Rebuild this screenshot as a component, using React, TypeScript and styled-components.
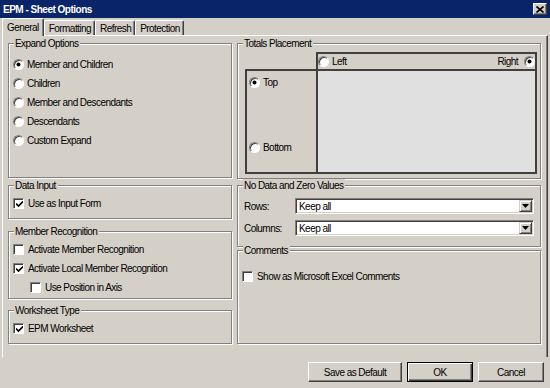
import { FC, ReactNode } from 'react';
import styled, { createGlobalStyle } from 'styled-components';

const GlobalStyle = createGlobalStyle`
  html, body {
    margin: 0;
    padding: 0;
    background: #d4d0c8;
  }
  #root {
    width: 550px;
    height: 388px;
    overflow: hidden;
  }
`;

const Window = styled.div`
  width: 550px;
  height: 388px;
  display: flex;
  flex-direction: column;
  background: #d4d0c8;
  color: #000;
  font-family: 'Liberation Sans', Arial, sans-serif;
  font-size: 10px;
  letter-spacing: -0.55px;
  line-height: 13px;
  box-sizing: border-box;
`;

const TitleBar = styled.div`
  height: 18px;
  flex: none;
  display: flex;
  align-items: center;
  justify-content: space-between;
  padding: 0 3px 0 3px;
  background: #0a246a;
  color: #fff;
  font-weight: bold;
  letter-spacing: -0.5px;
`;

const CloseButton = styled.div`
  width: 14px;
  height: 12px;
  box-sizing: border-box;
  display: flex;
  align-items: center;
  justify-content: center;
  background: #d4d0c8;
  border: 1px solid;
  border-color: #fff #404040 #404040 #fff;
  box-shadow: inset -1px -1px 0 #808080;
`;

const TabStrip = styled.div`
  height: 17px;
  flex: none;
  display: flex;
  align-items: flex-end;
  padding-left: 2px;
  position: relative;
  z-index: 1;
`;

const Tab = styled.div<{ $active?: boolean }>`
  height: ${({ $active }) => ($active ? 18 : 15)}px;
  margin-bottom: ${({ $active }) => ($active ? -1 : 0)}px;
  box-sizing: border-box;
  display: flex;
  align-items: center;
  padding: 0 ${({ $active }) => ($active ? 4 : 3)}px 0 4px;
  background: #d4d0c8;
  border-left: 1px solid #fff;
  border-top: 1px solid #fff;
  border-right: 1px solid #404040;
  box-shadow: inset -1px 0 0 #808080;
  border-radius: 2px 2px 0 0;
`;

const TabPage = styled.div`
  height: 322px;
  flex: none;
  margin: 0 2px;
  box-sizing: border-box;
  border-left: 1px solid #fff;
  border-top: 1px solid #fff;
  border-right: 1px solid #404040;
  box-shadow: inset -1px 0 0 #808080;
  display: grid;
  grid-template-columns: 224px 304px;
  column-gap: 5px;
  padding: 7px 0 0 5px;
  align-items: start;
`;

const Column = styled.div`
  display: flex;
  flex-direction: column;
`;

const Group = styled.div<{ $h: number; $mt?: number; $pt: number; $pl?: number }>`
  position: relative;
  box-sizing: border-box;
  height: ${({ $h }) => $h}px;
  margin-top: ${({ $mt }) => $mt ?? 0}px;
  padding: ${({ $pt }) => $pt}px 6px 0 ${({ $pl }) => $pl ?? 4}px;
  border: 1px solid #808080;
  box-shadow: inset 1px 1px 0 #fff, 1px 1px 0 #fff;
`;

const Caption = styled.span`
  position: absolute;
  top: -7px;
  left: 5px;
  padding: 0 2px 0 1px;
  background: #d4d0c8;
  line-height: 13px;
`;

const Row = styled.div<{ $indent?: number }>`
  height: 19px;
  display: flex;
  align-items: center;
  gap: 4px;
  padding-left: ${({ $indent }) => $indent ?? 0}px;
  white-space: nowrap;
`;

const RadioCircle = styled.span<{ $checked?: boolean }>`
  width: 11px;
  height: 11px;
  flex: none;
  box-sizing: border-box;
  border-radius: 50%;
  background: #fff;
  border: 1px solid;
  border-color: #808080 #fff #fff #808080;
  box-shadow: inset 1px 1px 0 #404040;
  position: relative;
  margin-right: -1px;
  &::after {
    content: '';
    display: ${({ $checked }) => ($checked ? 'block' : 'none')};
    position: absolute;
    left: 3px;
    top: 3px;
    width: 3px;
    height: 3px;
    border-radius: 50%;
    background: #000;
    box-shadow: 0 0 0 0.5px #000;
  }
`;

const CheckSquare = styled.span`
  width: 11px;
  height: 11px;
  flex: none;
  box-sizing: border-box;
  background: #fff;
  border: 1px solid;
  border-color: #808080 #fff #fff #808080;
  box-shadow: inset 1px 1px 0 #404040;
  display: flex;
  align-items: center;
  justify-content: center;
  padding: 1px 0 0 1px;
`;

const Radio: FC<{ checked?: boolean; children?: ReactNode }> = ({ checked, children }) => (
  <Row>
    <RadioCircle $checked={checked} />
    {children}
  </Row>
);

const Check: FC<{ checked?: boolean; indent?: number; children: ReactNode }> = ({
  checked,
  indent,
  children,
}) => (
  <Row $indent={indent}>
    <CheckSquare>
      {checked && (
        <svg width="7" height="7" viewBox="0 0 7 7">
          <path d="M0 2.5 L2.5 5 L7 0.5" stroke="#000" strokeWidth="1.6" fill="none" />
        </svg>
      )}
    </CheckSquare>
    {children}
  </Row>
);

const PlacementGrid = styled.div`
  display: grid;
  grid-template-columns: 71px 1fr;
  grid-template-rows: 19px 1fr;
  width: 292px;
  height: 122px;
`;

const PlacementHeader = styled.div`
  grid-column: 2;
  grid-row: 1;
  box-sizing: border-box;
  border: 2px solid #404040;
  display: flex;
  align-items: center;
  justify-content: space-between;
  padding: 0 1px 0 0;
  & > div:last-child {
    flex-direction: row-reverse;
    gap: 6px;
  }
`;

const PlacementSide = styled.div`
  grid-column: 1;
  grid-row: 2;
  margin-top: -2px;
  box-sizing: border-box;
  border: 2px solid #404040;
  border-right: none;
  display: flex;
  flex-direction: column;
  justify-content: space-between;
  padding: 2px 0 15px 2px;
  & > div {
    gap: 4px;
  }
`;

const PlacementArea = styled.div`
  grid-column: 2;
  grid-row: 2;
  box-sizing: border-box;
  border: 2px solid #404040;
  border-top: none;
  background: #e0e0e0;
`;

const FieldRow = styled.div`
  display: grid;
  grid-template-columns: 51px 1fr;
  align-items: center;
  height: 16px;
  margin-bottom: 6px;
`;

const Select = styled.div`
  height: 16px;
  box-sizing: border-box;
  background: #fff;
  border: 1px solid;
  border-color: #808080 #fff #fff #808080;
  box-shadow: inset 1px 1px 0 #404040, inset -1px -1px 0 #d4d0c8;
  display: flex;
  align-items: center;
  justify-content: space-between;
  padding: 1px 1px 1px 3px;
`;

const DropButton = styled.span`
  width: 13px;
  height: 12px;
  box-sizing: border-box;
  background: #d4d0c8;
  border: 1px solid;
  border-color: #d4d0c8 #404040 #404040 #d4d0c8;
  box-shadow: inset 1px 1px 0 #fff, inset -1px -1px 0 #808080;
  display: flex;
  align-items: center;
  justify-content: center;
`;

const ButtonBar = styled.div`
  display: flex;
  justify-content: flex-end;
  gap: 5px;
  padding-right: 6px;
  margin-top: 5px;
`;

const Button = styled.div<{ $w: number; $default?: boolean }>`
  width: ${({ $w }) => $w}px;
  height: 20px;
  box-sizing: border-box;
  display: flex;
  align-items: center;
  justify-content: center;
  background: #d4d0c8;
  border: 1px solid;
  border-color: ${({ $default }) => ($default ? '#000' : '#fff #404040 #404040 #fff')};
  box-shadow: ${({ $default }) =>
    $default
      ? 'inset 1px 1px 0 #fff, inset -1px -1px 0 #404040, inset -2px -2px 0 #808080'
      : 'inset -1px -1px 0 #808080'};
`;

const Arrow = () => (
  <svg width="7" height="4" viewBox="0 0 7 4">
    <path d="M0 0 H7 L3.5 4 Z" fill="#000" />
  </svg>
);

export default function App() {
  return (
    <Window>
      <GlobalStyle />
      <TitleBar>
        <span>EPM - Sheet Options</span>
        <CloseButton>
          <svg width="8" height="7" viewBox="0 0 8 7">
            <path d="M0.5 0.5 L7.5 6.5 M7.5 0.5 L0.5 6.5" stroke="#000" strokeWidth="1.6" />
          </svg>
        </CloseButton>
      </TitleBar>
      <TabStrip>
        <Tab $active>General</Tab>
        <Tab>Formatting</Tab>
        <Tab>Refresh</Tab>
        <Tab>Protection</Tab>
      </TabStrip>
      <TabPage>
        <Column>
          <Group $h={135} $pt={11}>
            <Caption>Expand Options</Caption>
            <Radio checked>Member and Children</Radio>
            <Radio>Children</Radio>
            <Radio>Member and Descendants</Radio>
            <Radio>Descendants</Radio>
            <Radio>Custom Expand</Radio>
          </Group>
          <Group $h={34} $mt={7} $pt={8}>
            <Caption>Data Input</Caption>
            <Check checked>Use as Input Form</Check>
          </Group>
          <Group $h={68} $mt={12} $pt={8}>
            <Caption>Member Recognition</Caption>
            <Check>Activate Member Recognition</Check>
            <Check checked>Activate Local Member Recognition</Check>
            <Check indent={17}>Use Position in Axis</Check>
          </Group>
          <Group $h={34} $mt={11} $pt={8}>
            <Caption>Worksheet Type</Caption>
            <Check checked>EPM Worksheet</Check>
          </Group>
        </Column>
        <Column>
          <Group $h={136} $pt={8} $pl={7}>
            <Caption>Totals Placement</Caption>
            <PlacementGrid>
              <PlacementHeader>
                <Radio>Left</Radio>
                <Radio checked>Right</Radio>
              </PlacementHeader>
              <PlacementSide>
                <Radio checked>Top</Radio>
                <Radio>Bottom</Radio>
              </PlacementSide>
              <PlacementArea />
            </PlacementGrid>
          </Group>
          <Group $h={62} $mt={6} $pt={12} $pl={6}>
            <Caption>No Data and Zero Values</Caption>
            <FieldRow>
              <span>Rows:</span>
              <Select>
                <span>Keep all</span>
                <DropButton>
                  <Arrow />
                </DropButton>
              </Select>
            </FieldRow>
            <FieldRow>
              <span>Columns:</span>
              <Select>
                <span>Keep all</span>
                <DropButton>
                  <Arrow />
                </DropButton>
              </Select>
            </FieldRow>
          </Group>
          <Group $h={94} $mt={3} $pt={16}>
            <Caption>Comments</Caption>
            <Check>Show as Microsoft Excel Comments</Check>
          </Group>
        </Column>
      </TabPage>
      <ButtonBar>
        <Button $w={94}>Save as Default</Button>
        <Button $w={66} $default>
          OK
        </Button>
        <Button $w={66}>Cancel</Button>
      </ButtonBar>
    </Window>
  );
}
